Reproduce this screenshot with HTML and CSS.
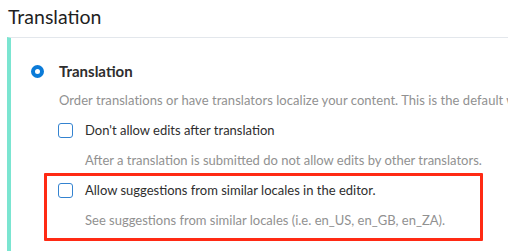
FILE: index.html
```html
<!DOCTYPE html>
<html lang="en">
<head>
<meta charset="utf-8">
<title>Translation settings</title>
<link rel="stylesheet" href="styles.css">
</head>
<body>
<h1 class="page-title">Translation</h1>
<section class="card">
  <div class="option">
    <div class="option-head">
      <span class="radio" aria-hidden="true"></span>
      <span class="option-title">Translation</span>
    </div>
    <p class="option-desc">Order translations or have translators localize your content. This is the default workflow.</p>
    <ul class="checks">
      <li class="check">
        <div class="check-row">
          <span class="box" aria-hidden="true"></span>
          <span class="check-label">Don't allow edits after translation</span>
        </div>
        <p class="check-help">After a translation is submitted do not allow edits by other translators.</p>
      </li>
      <li class="check highlighted">
        <div class="check-row">
          <span class="box" aria-hidden="true"></span>
          <span class="check-label">Allow suggestions from similar locales in the editor.</span>
        </div>
        <p class="check-help">See suggestions from similar locales (i.e. en_US, en_GB, en_ZA).</p>
      </li>
    </ul>
  </div>
</section>
</body>
</html>
```
FILE: styles.css
```css
html, body {
  margin: 0;
  padding: 0;
  background: #ffffff;
  overflow: hidden;
}
body {
  font-family: "Lato", "Liberation Sans", sans-serif;
  color: #2b2b2b;
  width: 508px;
  height: 251px;
}
.page-title {
  margin: 0;
  padding: 5px 0 0 8px;
  height: 32px;
  font-size: 19.5px;
  line-height: 24px;
  font-weight: 400;
  color: #1f1f1f;
}
.card {
  margin-left: 7px;
  border-left: 4px solid #7be5d1;
  border-top: 1px solid #e3e7ec;
  padding: 18px 0 16px 20px;
  white-space: nowrap;
  overflow: hidden;
}
.option-head {
  display: flex;
  align-items: center;
  gap: 15px;
  height: 30px;
}
.radio {
  width: 13px;
  height: 13px;
  box-sizing: border-box;
  border-radius: 50%;
  border: 4px solid #0b7bd8;
  background: #fff;
  flex: none;
}
.option-title {
  font-size: 15px;
  font-weight: 700;
  color: #2e2e2e;
}
.option-desc {
  margin: 0 0 0 28px;
  font-size: 13px;
  line-height: 29px;
  letter-spacing: 0.05px;
  color: #919191;
}
.checks {
  list-style: none;
  margin: 0 0 0 27px;
  padding: 0;
}
.check {
  position: relative;
}
.check-row {
  display: flex;
  align-items: center;
  gap: 12px;
  height: 30px;
}
.box {
  width: 15px;
  height: 15px;
  box-sizing: border-box;
  border: 1.5px solid #3483d0;
  border-radius: 3px;
  background: #fff;
  flex: none;
}
.check-label {
  font-size: 13px;
  color: #2e2e2e;
}
.check-help {
  margin: 0 0 0 27px;
  font-size: 13px;
  line-height: 30px;
  color: #919191;
}
.highlighted::before {
  content: "";
  position: absolute;
  top: -2px;
  bottom: -6px;
  left: -14px;
  width: 439px;
  border: 3px solid #ff2a14;
  border-radius: 1px;
  box-sizing: border-box;
  pointer-events: none;
}
```
